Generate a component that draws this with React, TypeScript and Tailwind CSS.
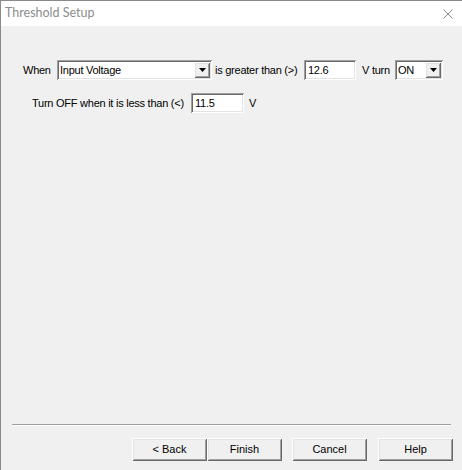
import React from 'react';

const sunken =
  'bg-white shadow-[inset_1px_1px_#a0a0a0,inset_-1px_-1px_#ffffff,inset_2px_2px_#696969,inset_-2px_-2px_#e3e3e3]';
const raised =
  'bg-[#f0f0f0] shadow-[inset_1px_1px_#ffffff,inset_-1px_-1px_#696969,inset_2px_2px_#e3e3e3,inset_-2px_-2px_#a0a0a0]';

function DropArrow() {
  return (
    <div className={`flex h-[16px] w-[16px] items-center justify-center ${raised}`}>
      <svg width="7" height="4" viewBox="0 0 7 4">
        <path d="M0 0h7L3.5 4z" fill="#000" />
      </svg>
    </div>
  );
}

interface ComboProps {
  value: string;
  width: string;
}

function Combo({ value, width }: ComboProps) {
  return (
    <div className={`flex h-[20px] items-center justify-between pl-[3px] pr-[2px] ${width} ${sunken}`}>
      <span className="leading-none">{value}</span>
      <DropArrow />
    </div>
  );
}

function Field({ value, width }: ComboProps) {
  return (
    <div className={`flex h-[20px] items-center pl-[4px] ${width} ${sunken}`}>
      <span className="leading-none">{value}</span>
    </div>
  );
}

function Button({ label }: { label: string }) {
  return (
    <div className={`flex h-[23px] w-[75px] items-center justify-center ${raised}`}>
      {label}
    </div>
  );
}

export default function App() {
  return (
    <div
      className="flex h-[470px] w-[462px] flex-col overflow-hidden border-l border-t border-[#8a8a8a] bg-[#f0f0f0] text-[11px] text-black"
      style={{ fontFamily: '"Liberation Sans", Arial, sans-serif' }}
    >
      {/* title bar */}
      <div className="flex h-[25px] items-center justify-between bg-white pl-[4px] pr-[9px]">
        <span
          className="text-[12.5px] text-[#8c8c8c]"
          style={{ fontFamily: 'Lato, "Noto Sans", sans-serif' }}
        >
          Threshold Setup
        </span>
        <svg width="10" height="10" viewBox="0 0 10 10">
          <path d="M0.5 0.5L9.5 9.5M9.5 0.5L0.5 9.5" stroke="#8a8a8a" strokeWidth="1" />
        </svg>
      </div>

      <div className="flex flex-1 flex-col whitespace-nowrap tracking-[-0.25px]">
        <div className="mt-[34px] flex items-center pl-[22px]">
          <span className="w-[34px]">When</span>
          <Combo value="Input Voltage" width="w-[155px]" />
          <span className="ml-[3px] w-[89px]">is greater than (&gt;)</span>
          <Field value="12.6" width="w-[52px]" />
          <span className="ml-[6px] w-[33px]">V turn</span>
          <Combo value="ON" width="w-[48px]" />
        </div>

        <div className="mt-[13px] flex items-center pl-[31px]">
          <span className="w-[159px]">Turn OFF when it is less than (&lt;)</span>
          <Field value="11.5" width="w-[53px]" />
          <span className="ml-[5px]">V</span>
        </div>

        <div className="flex-1" />

        <div className="mx-[11px] border-b border-t border-b-white border-t-[#a0a0a0]" />
        <div className="mb-[9px] mt-[12px] flex pr-[9px] tracking-normal">
          <div className="flex-1" />
          <Button label="< Back" />
          <Button label="Finish" />
          <div className="w-[10px]" />
          <Button label="Cancel" />
          <div className="w-[11px]" />
          <Button label="Help" />
        </div>
      </div>
    </div>
  );
}
